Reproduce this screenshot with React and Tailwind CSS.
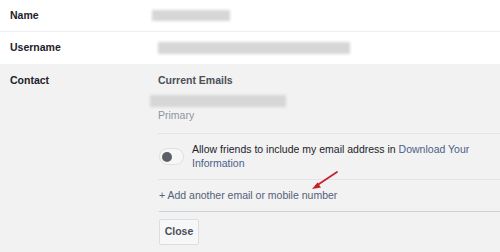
import React from "react";

function Blur({ className }) {
  return <div className={`bg-[#d6d6d6] blur-[1.5px] ${className}`} />;
}

export default function App() {
  return (
    <div className="w-[500px] h-[252px] overflow-hidden bg-white text-[10.5px] text-[#1d2129] font-['Liberation_Sans',Arial,sans-serif] relative">
      <div className="flex items-center h-8 border-b border-[#eceef1]">
        <div className="w-[152px] pl-[10px] font-bold">Name</div>
        <Blur className="w-[78px] h-[11px]" />
      </div>
      <div className="flex items-center h-8">
        <div className="w-[158px] pl-[10px] font-bold">Username</div>
        <Blur className="w-[192px] h-[12px]" />
      </div>
      <div className="flex bg-[#f2f2f2] h-[188px]">
        <div className="w-[158px] pl-[10px] pt-[10px] font-bold leading-[13px]">Contact</div>
        <div className="flex-1 flex flex-col">
          <div className="pt-[10px] font-bold text-[#4b4f56] leading-[13px]">Current Emails</div>
          <Blur className="w-[136px] h-[12px] mt-[8px] -ml-[8px]" />
          <div className="h-[27px] pt-[2px] border-b border-[#e2e4e8]">
            <div className="text-[#90949c] leading-[13px]">Primary</div>
          </div>
          <div className="h-[46px] flex items-center gap-[8px] border-b border-[#e2e4e8]">
            <div className="ml-[1px] w-[25px] h-[17px] rounded-full bg-[#f7f7f7] border border-[#dddfe2] flex items-center px-[2px] shrink-0">
              <div className="w-[10px] h-[10px] rounded-full bg-[#5d6066]" />
            </div>
            <div className="leading-[13.5px] text-[#1d2129] pr-[20px]">
              Allow friends to include my email address in{" "}
              <span className="text-[#4b5f87]">Download Your Information</span>
            </div>
          </div>
          <div className="h-[32px] flex items-center text-[#55607a] border-b border-[#cdd0d5] ml-[1px]">
            + Add another email or mobile number
          </div>
          <div className="pt-[7px] ml-[1px]">
            <button className="h-[26px] w-[40px] bg-[#f6f7f9] border border-[#dcdee2] rounded-[2px] font-bold text-[#4b4f56] text-[10.5px]">
              Close
            </button>
          </div>
        </div>
      </div>
      <svg className="absolute left-[308px] top-[168px]" width="34" height="24" viewBox="0 0 34 24">
        <line x1="29" y1="4" x2="8" y2="18" stroke="#c4232b" strokeWidth="1.8" strokeLinecap="round" />
        <path d="M4 21 L13 19.5 L9.5 14.5 Z" fill="#c4232b" />
      </svg>
    </div>
  );
}
